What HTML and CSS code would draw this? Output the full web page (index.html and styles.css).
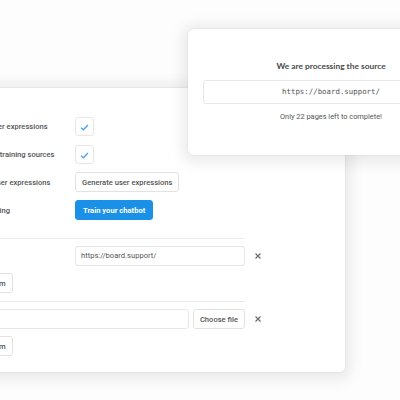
FILE: index.html
```html
<!DOCTYPE html>
<html lang="en">
<head>
  <meta charset="UTF-8">
  <meta name="viewport" content="width=device-width, initial-scale=1.0">
  <title>Chatbot training</title>
  <link rel="stylesheet" href="styles.css">
</head>
<body>
  <div class="stage">
    <div class="panel">
      <div class="settings">
        <div class="label">Suggest user expressions</div>
        <div class="value"><span class="check"><svg width="9" height="7" viewBox="0 0 9 7"><polyline points="1,3.6 3.3,5.8 8,1" fill="none" stroke="#4a9ff0" stroke-width="1.3"/></svg></span></div>

        <div class="label">Include our training sources</div>
        <div class="value"><span class="check"><svg width="9" height="7" viewBox="0 0 9 7"><polyline points="1,3.6 3.3,5.8 8,1" fill="none" stroke="#4a9ff0" stroke-width="1.3"/></svg></span></div>

        <div class="label">Generate user expressions</div>
        <div class="value"><button class="btn">Generate user expressions</button></div>

        <div class="label">Run AI training</div>
        <div class="value"><button class="btn btn-blue">Train your chatbot</button></div>
      </div>

      <div class="sources">
        <div class="source">
          <div class="rule"></div>
          <div class="field url-field">
            <span></span>
            <div class="input">https://board.support/</div>
          </div>
          <div class="remove"><svg width="6" height="6" viewBox="0 0 6 6"><path d="M0.5 0.5L5.5 5.5M5.5 0.5L0.5 5.5" stroke="#666" stroke-width="1.1"/></svg></div>
          <div class="actions"><button class="btn">Delete item</button></div>
        </div>

        <div class="source">
          <div class="rule"></div>
          <div class="field file-field">
            <div class="input"></div>
            <button class="btn">Choose file</button>
          </div>
          <div class="remove"><svg width="6" height="6" viewBox="0 0 6 6"><path d="M0.5 0.5L5.5 5.5M5.5 0.5L0.5 5.5" stroke="#666" stroke-width="1.1"/></svg></div>
          <div class="actions"><button class="btn">Delete item</button></div>
        </div>
      </div>
    </div>

    <div class="popup">
      <h3>We are processing the source</h3>
      <div class="popup-url">https://board.support/</div>
      <p>Only 22 pages left to complete!</p>
    </div>
  </div>
</body>
</html>
```

FILE: styles.css
```css
body {
  margin: 0;
  background: #fdfdfd;
  font-family: Roboto, 'Liberation Sans', sans-serif;
}
.stage {
  position: relative;
  width: 400px;
  height: 400px;
  overflow: hidden;
}
.panel {
  box-sizing: border-box;
  width: 399px;
  margin: 88px 0 0 -54px;
  padding: 24px 74px 16px 14px;
  background: #fff;
  border-radius: 5px;
  box-shadow: 0 0 0 1px rgba(0,0,0,0.03), 0 2px 14px 6px rgba(0,0,0,0.08);
}
.settings {
  display: grid;
  grid-template-columns: 115px auto;
  grid-auto-rows: 28px;
  align-items: center;
}
.label {
  font-size: 7.6px;
  font-weight: 500;
  color: #555;
  white-space: nowrap;
}
.value {
  display: flex;
}
.check {
  box-sizing: border-box;
  width: 19px;
  height: 19px;
  border: 1px solid #e6e6e6;
  border-radius: 3px;
  display: flex;
  align-items: center;
  justify-content: center;
  padding-top: 2px;
}
.btn {
  box-sizing: border-box;
  height: 20px;
  padding: 0 6px;
  border: 1px solid #e2e2e2;
  border-radius: 3px;
  background: #fff;
  color: #555;
  font-family: Roboto, 'Liberation Sans', sans-serif;
  font-size: 7.6px;
  font-weight: 500;
  white-space: nowrap;
}
.btn-blue {
  background: #1a90e6;
  border-color: #1a90e6;
  color: #fff;
  font-weight: 700;
  padding: 0 7px;
}
.sources {
  margin-top: 14px;
}
.source {
  display: grid;
  grid-template-columns: 285px 26px;
  row-gap: 7px;
  padding-bottom: 8px;
}
.source:last-child {
  padding-bottom: 0;
}
.rule {
  grid-column: 1;
  height: 1px;
  background: #ebebeb;
}
.field {
  grid-column: 1;
  display: grid;
  height: 20px;
}
.url-field {
  grid-template-columns: 115px 1fr;
}
.file-field {
  grid-template-columns: 1fr auto;
  column-gap: 4px;
}
.input {
  box-sizing: border-box;
  height: 20px;
  padding: 0 5px;
  border: 1px solid #e6e6e6;
  border-radius: 3px;
  font-size: 7.6px;
  color: #555;
  line-height: 18px;
}
.remove {
  display: flex;
  align-items: center;
  justify-content: center;
}
.actions {
  grid-column: 1;
  display: flex;
}
.popup {
  position: absolute;
  top: 29px;
  left: 188px;
  box-sizing: border-box;
  width: 286px;
  height: 126px;
  padding: 31px 15px 0;
  background: #fff;
  border-radius: 6px;
  box-shadow: 0 0 0 1px rgba(0,0,0,0.03), 0 2px 14px 6px rgba(0,0,0,0.08);
  text-align: center;
}
.popup h3 {
  margin: 0 0 8px;
  font-family: Lato, 'Open Sans', sans-serif;
  font-size: 8.4px;
  font-weight: 700;
  color: #4a4a4a;
  line-height: 12px;
}
.popup-url {
  box-sizing: border-box;
  height: 24px;
  border: 1px solid #e8e8e8;
  border-radius: 3px;
  font-family: 'DejaVu Sans Mono', monospace;
  font-size: 7.4px;
  color: #555;
  line-height: 22px;
}
.popup p {
  margin: 8px 0 0;
  font-size: 7.4px;
  color: #555;
  line-height: 10px;
}
```
